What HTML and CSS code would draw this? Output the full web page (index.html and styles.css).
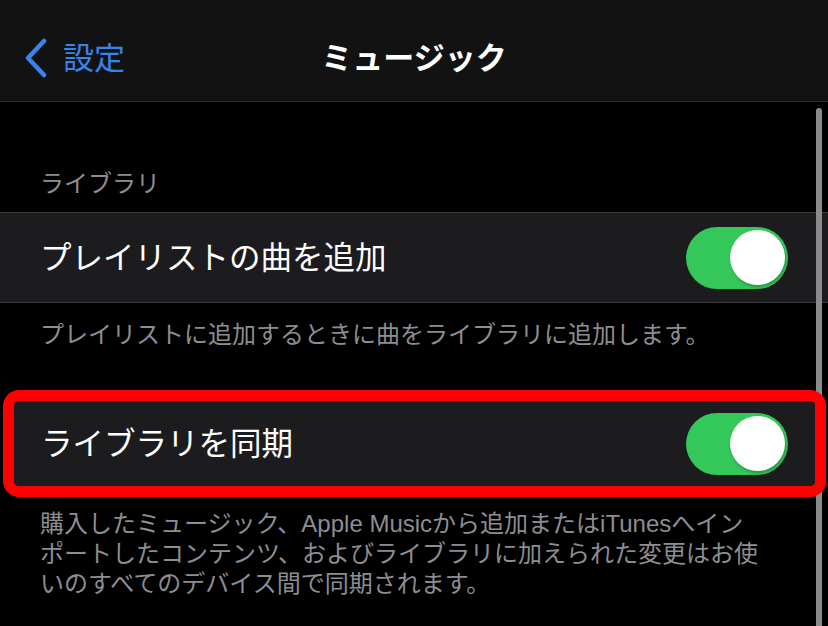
FILE: index.html
```html
<!DOCTYPE html>
<html lang="ja">
<head>
  <meta charset="UTF-8">
  <meta name="viewport" content="width=device-width, initial-scale=1.0">
  <title>ミュージック</title>
  <link rel="stylesheet" href="styles.css">
</head>
<body>

  <header class="navbar">
    <a class="nav-back">
      <svg class="chevron" width="26" height="40" viewBox="0 0 26 40">
        <path d="M20 3 L4 20 L20 37" fill="none" stroke="currentColor" stroke-width="4.5" stroke-linecap="round" stroke-linejoin="round"/>
      </svg>
      <span>設定</span>
    </a>
    <h1 class="nav-title">ミュージック</h1>
    <span></span>
  </header>

  <main class="settings">
    <div class="section-header">ライブラリ</div>

    <div class="group">
      <div class="cell">
        <span class="cell-label">プレイリストの曲を追加</span>
        <span class="switch"><span class="knob"></span></span>
      </div>
    </div>
    <p class="section-footer">プレイリストに追加するときに曲をライブラリに追加します。</p>

    <!-- red box from the original screenshot -->
    <div class="highlight">
      <div class="cell cell-inset">
        <span class="cell-label">ライブラリを同期</span>
        <span class="switch"><span class="knob"></span></span>
      </div>
    </div>
    <p class="section-footer footer-tight">購入したミュージック、Apple Musicから追加またはiTunesへインポートしたコンテンツ、およびライブラリに加えられた変更はお使いのすべてのデバイス間で同期されます。</p>
  </main>

  <div class="scrollbar"></div>

</body>
</html>
```

FILE: styles.css
```css
body {
  font-family: 'Liberation Sans', 'Noto Sans CJK JP', sans-serif;
  background-color: #000;
  color: #fff;
  margin: 0;
  height: 626px;
  overflow: hidden;
  position: relative;
}

.navbar {
  display: grid;
  grid-template-columns: 1fr auto 1fr;
  align-items: center;
  height: 102px;
  padding-top: 17px;
  box-sizing: border-box;
  background-color: #121212;
  border-bottom: 1px solid #2a2a2c;
}

.nav-back {
  display: flex;
  align-items: center;
  gap: 13px;
  padding-left: 24px;
  color: #3784ec; /* iOS blue, a bit muted */
  font-size: 31px;
  line-height: 40px;
}

.chevron {
  display: block;
  margin-top: -2px;
}

.nav-title {
  margin: 0;
  font-size: 31px;
  font-weight: 700;
  line-height: 40px;
  color: #fff;
}

.section-header {
  padding: 67px 40px 13px;
  font-size: 24px;
  line-height: 30px;
  color: #8d8d92;
}

.group {
  border-top: 1px solid #3a3a3c;
  border-bottom: 1px solid #3a3a3c;
}

.cell {
  display: flex;
  justify-content: space-between;
  align-items: center;
  height: 89px;
  padding: 0 40px 0 40px;
  background-color: #1c1c1e;
}

.cell-label {
  font-size: 31.5px;
  line-height: 40px;
}

.switch {
  display: flex;
  justify-content: flex-end;
  align-items: center;
  width: 102px;
  height: 62px;
  padding: 0 3px;
  box-sizing: border-box;
  border-radius: 31px;
  background-color: #34c759;
}

.knob {
  width: 55px;
  height: 55px;
  border-radius: 50%;
  background-color: #fff;
  box-shadow: 1px 2px 3px rgba(0, 0, 0, 0.25);
}

.section-footer {
  margin: 0;
  padding: 17px 62px 0 40px;
  font-size: 24px;
  line-height: 30px;
  color: #8d8d92;
}

.footer-tight {
  padding-top: 12px;
}

.highlight {
  position: relative;
  z-index: 1;
  margin: 40px 2px 0 3px;
  border: 11px solid #fe0000;
  border-radius: 16px;
  overflow: hidden;
}

.cell-inset {
  height: 85px;
  padding: 0 27px 0 27px;
}

.scrollbar {
  position: absolute;
  top: 108px;
  right: 6px;
  width: 6px;
  height: 540px;
  border-radius: 3px;
  background-color: #8a8a8c;
}
```
